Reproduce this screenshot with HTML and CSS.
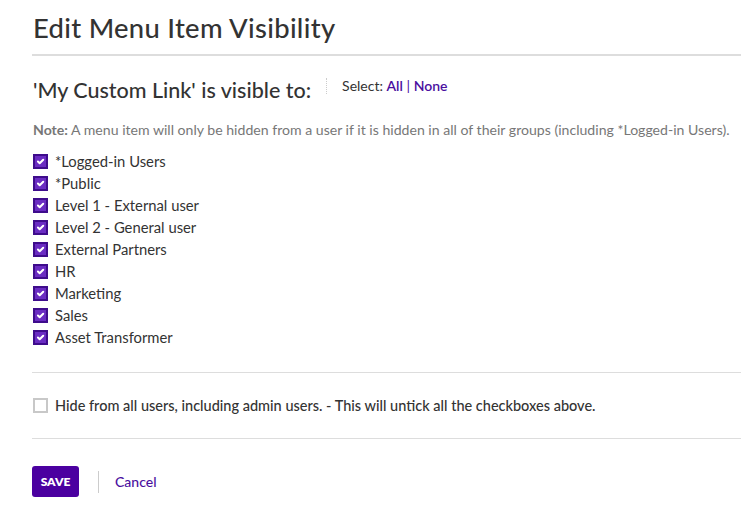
FILE: index.html
```html
<!DOCTYPE html>
<html>
<head>
    <title>Edit Menu Item Visibility</title>
    <link rel="stylesheet" href="styles.css">
</head>
<body>
    <div class="page">
        <h1>Edit Menu Item Visibility</h1>

        <div class="visible-head">
            <h2>'My Custom Link' is visible to:</h2>
            <div class="select">Select: <a href="#">All</a> <span class="pipe">|</span> <a href="#">None</a></div>
        </div>

        <p class="note"><b>Note:</b> A menu item will only be hidden from a user if it is hidden in all of their groups (including *Logged-in Users).</p>

        <!-- group list -->
        <ul class="groups">
            <li><span class="box on"><svg viewBox="0 0 15 15"><path d="M4 7.6l2.4 2.3 4.8-4.8" /></svg></span>*Logged-in Users</li>
            <li><span class="box on"><svg viewBox="0 0 15 15"><path d="M4 7.6l2.4 2.3 4.8-4.8" /></svg></span>*Public</li>
            <li><span class="box on"><svg viewBox="0 0 15 15"><path d="M4 7.6l2.4 2.3 4.8-4.8" /></svg></span>Level 1 - External user</li>
            <li><span class="box on"><svg viewBox="0 0 15 15"><path d="M4 7.6l2.4 2.3 4.8-4.8" /></svg></span>Level 2 - General user</li>
            <li><span class="box on"><svg viewBox="0 0 15 15"><path d="M4 7.6l2.4 2.3 4.8-4.8" /></svg></span>External Partners</li>
            <li><span class="box on"><svg viewBox="0 0 15 15"><path d="M4 7.6l2.4 2.3 4.8-4.8" /></svg></span>HR</li>
            <li><span class="box on"><svg viewBox="0 0 15 15"><path d="M4 7.6l2.4 2.3 4.8-4.8" /></svg></span>Marketing</li>
            <li><span class="box on"><svg viewBox="0 0 15 15"><path d="M4 7.6l2.4 2.3 4.8-4.8" /></svg></span>Sales</li>
            <li><span class="box on"><svg viewBox="0 0 15 15"><path d="M4 7.6l2.4 2.3 4.8-4.8" /></svg></span>Asset Transformer</li>
        </ul>

        <div class="hide-row">
            <span class="box"></span>Hide from all users, including admin users. - This will untick all the checkboxes above.
        </div>

        <div class="actions">
            <button class="save">SAVE</button>
            <span class="divider"></span>
            <a href="#" class="cancel">Cancel</a>
        </div>
    </div>
</body>
</html>
```

FILE: styles.css
```css
html, body {
    margin: 0;
    padding: 0;
    background: #fff;
}

body {
    font-family: Lato, "Open Sans", sans-serif;
    color: #333;
}

.page {
    margin-left: 32px;
    width: 709px;
}

h1 {
    margin: 0;
    padding: 11px 0 0 1px;
    height: 43px;
    font-size: 27.4px;
    font-weight: 500;
    letter-spacing: 0.3px;
    color: #333;
    border-bottom: 2px solid #ddd;
}

.visible-head {
    display: flex;
    align-items: flex-start;
    padding-top: 17px;
    height: 40px;
}
h2 {
    margin: 0;
    padding: 4px 0 0 1px;
    font-size: 21.5px;
    font-weight: 500;
    color: #333;
}
.select {
    margin: 5px 0 0 15px;
    padding-left: 15px;
    border-left: 1px dotted #ccc;
    font-size: 14px;
    line-height: 16px;
    color: #333;
    height: 16px;
}
.select a {
    color: #4b0fa0;
    font-weight: 600;
    text-decoration: none;
}
.pipe {
    color: #4b0fa0;
}

.note {
    margin: 8px 0 0 1px;
    font-size: 14.1px;
    line-height: 18px;
    color: #777;
}
.note b {
    font-weight: 700;
}

.groups {
    list-style: none;
    margin: 11px 0 0 0;
    padding: 0 0 24px 1px;
    border-bottom: 1px solid #ddd;
}
.groups li {
    display: flex;
    align-items: center;
    height: 22px;
    font-size: 14.8px;
    color: #333;
}

.box {
    box-sizing: border-box;
    width: 15px;
    height: 15px;
    margin-right: 7px;
    border: 2px solid #c8c8c8;
    background: #fff;
    flex: none;
}
.box.on {
    border-color: #3e0c8c;
    background: #6a2cc2;
}
.box svg {
    display: block;
    width: 11px;
    height: 11px;
    margin: 0;
}
.box svg path {
    fill: none;
    stroke: #fff;
    stroke-width: 2.8;
    stroke-linecap: round;
    stroke-linejoin: round;
}

.hide-row {
    display: flex;
    align-items: center;
    height: 65px;
    padding-left: 1px;
    font-size: 14.5px;
    font-weight: 500;
    color: #333;
    border-bottom: 1px solid #ddd;
}

.actions {
    display: flex;
    align-items: center;
    padding-top: 27px;
}
.save {
    width: 47px;
    height: 31px;
    border: none;
    border-radius: 3px;
    background: #4b00a0;
    color: #fff;
    font-family: inherit;
    font-size: 12px;
    font-weight: 800;
    padding: 0;
}
.divider {
    width: 1px;
    height: 22px;
    background: #ccc;
    margin: 0 16px 0 19px;
}
.cancel {
    color: #4b0fa0;
    font-size: 14px;
    font-weight: 500;
    text-decoration: none;
}
```
